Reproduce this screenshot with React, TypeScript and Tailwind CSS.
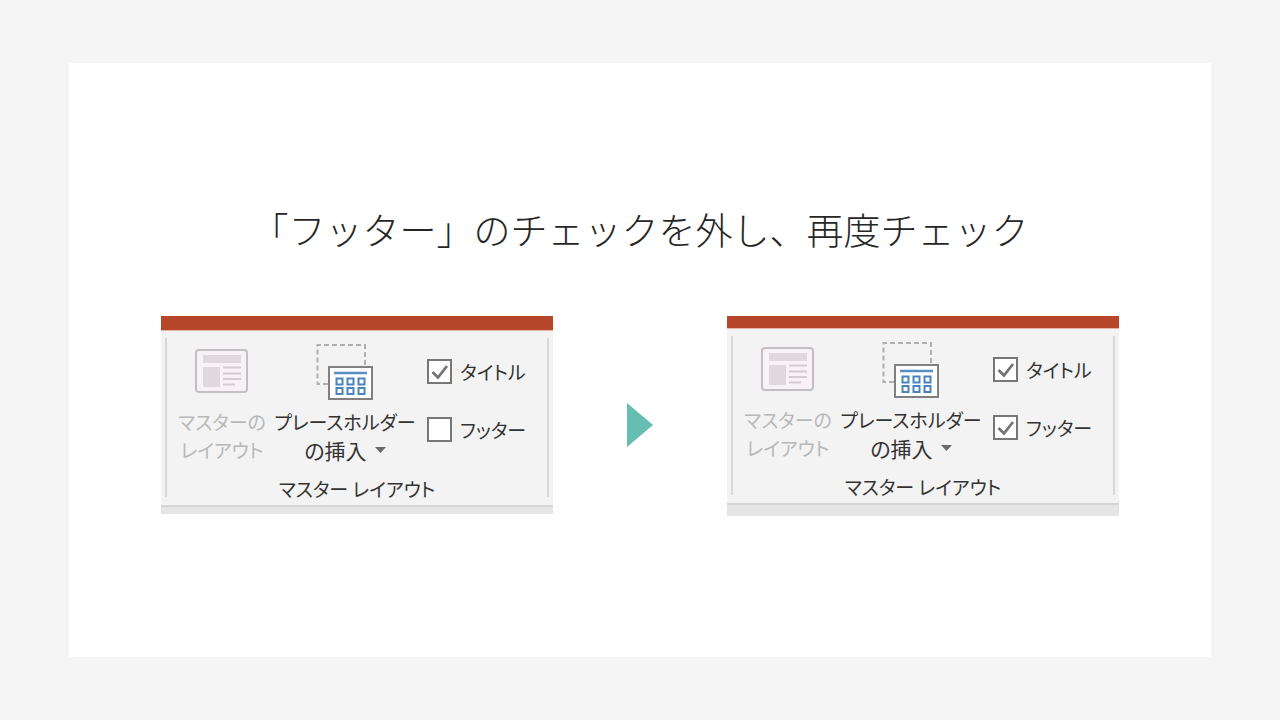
import clsx from "clsx";

const ribbonFont = "font-['Noto_Sans_CJK_JP',sans-serif] [font-feature-settings:'palt']";

function MasterLayoutIcon() {
    return (
        <svg width="54" height="44" viewBox="0 0 54 44" fill="none" aria-hidden="true">
            <rect x="1" y="1" width="51" height="42" rx="3" fill="#f8f2f8" stroke="#c2bec2" strokeWidth="2" />
            <rect x="8" y="6" width="38" height="8" fill="#dfd9df" />
            <rect x="8" y="18" width="17" height="20" fill="#dfd9df" />
            <path d="M28 18.5h18M28 24.5h18M28 30h18M28 35.5h12" stroke="#d3cbd3" strokeWidth="2" />
        </svg>
    );
}

function PlaceholderIcon() {
    return (
        <svg width="58" height="58" viewBox="0 0 58 58" fill="none" aria-hidden="true">
            <path d="M12 41H1.5V2H49V24" stroke="#b0b0b0" strokeWidth="2" strokeDasharray="5 3" />
            <rect x="13" y="24" width="43" height="32" fill="#fff" stroke="#808080" strokeWidth="2" />
            <path d="M18 30h33" stroke="#5a8fc5" strokeWidth="2.4" />
            {[35.5, 45].map((y) =>
                [20.5, 31.5, 42.5].map((x) => (
                    <rect key={`${x}-${y}`} x={x} y={y} width="6" height="6" fill="#fff" stroke="#4a83bd" strokeWidth="2" />
                ))
            )}
        </svg>
    );
}

function CheckOption({ id, label, checked }: { id: string; label: string; checked: boolean }) {
    return (
        <div className="flex items-center gap-2">
            <span className="grid">
                <input
                    id={id}
                    type="checkbox"
                    defaultChecked={checked}
                    className="peer col-start-1 row-start-1 size-[25px] appearance-none border-2 border-[#777777] bg-white"
                />
                <svg
                    viewBox="0 0 25 25"
                    fill="none"
                    aria-hidden="true"
                    className="pointer-events-none invisible col-start-1 row-start-1 size-[25px] peer-checked:visible"
                >
                    <path d="M5.5 13l5.5 5.5L20 7" stroke="#737373" strokeWidth="2.8" />
                </svg>
            </span>
            <label htmlFor={id} className="whitespace-nowrap pt-[2px] text-[19px] leading-[26px]">
                {label}
            </label>
        </div>
    );
}

function RibbonPanel({ name, footerChecked, tall }: { name: string; footerChecked: boolean; tall?: boolean }) {
    return (
        <section className={clsx("w-[392px] shrink-0 bg-[#f3f3f3] text-[#333333]", ribbonFont)}>
            <div className={clsx("border-b border-[#e3b5a8] bg-[#b7472a]", tall ? "h-[13px]" : "h-[15px]")} />
            <div className="px-1 pb-2 pt-[7px]">
                <div className="border-x-2 border-[#d8d8d8]">
                    <div className="flex items-start">
                        <button
                            type="button"
                            disabled
                            className="ml-2 flex w-[94px] flex-col items-center whitespace-nowrap text-[19px] leading-7 text-[#b8b8b8]"
                        >
                            <span className="h-[70px] pt-[11px]">
                                <MasterLayoutIcon />
                            </span>
                            <span>マスターの</span>
                            <span>レイアウト</span>
                        </button>
                        <button
                            type="button"
                            className="flex w-[152px] flex-col items-center whitespace-nowrap text-[19px] leading-7"
                        >
                            <span className="h-[70px] pt-[5px]">
                                <PlaceholderIcon />
                            </span>
                            <span>プレースホルダー</span>
                            <span className="flex items-center gap-2 text-[21px]">
                                の挿入
                                <svg width="11" height="6" viewBox="0 0 11 6" aria-hidden="true">
                                    <path d="M0 0h11L5.5 6z" fill="#6a6a6a" />
                                </svg>
                            </span>
                        </button>
                        <div className="ml-[6px] mt-[19px] flex flex-col gap-[30px]">
                            <CheckOption id={`${name}-title`} label="タイトル" checked />
                            <CheckOption id={`${name}-footer`} label="フッター" checked={footerChecked} />
                        </div>
                    </div>
                    <p className="mt-[17px] text-center text-[19px] leading-4">マスター レイアウト</p>
                </div>
            </div>
            <div className={clsx("border-t-2 border-[#d4d4d4] bg-[#e5e5e5]", tall ? "h-[13px]" : "h-[9px]")} />
        </section>
    );
}

export default function App() {
    return (
        <div className="flex min-h-screen bg-[#f5f5f5] px-[69px] py-[63px]">
            <main className="flex flex-1 flex-col items-center bg-white pb-16 pt-[138px]">
                <h1 className="whitespace-nowrap font-['Noto_Sans_CJK_JP',sans-serif] text-[37px] font-light leading-[56px] text-[#262626]">
                    「フッター」のチェックを外し、再度チェック
                </h1>
                <div className="mt-[59px] flex items-start">
                    <RibbonPanel name="before" footerChecked={false} />
                    <svg width="26" height="44" viewBox="0 0 26 44" className="mx-[74px] mt-[87px]" aria-hidden="true">
                        <path d="M0 0l26 22L0 44z" fill="#65beb0" />
                    </svg>
                    <RibbonPanel name="after" footerChecked tall />
                </div>
            </main>
        </div>
    );
}
